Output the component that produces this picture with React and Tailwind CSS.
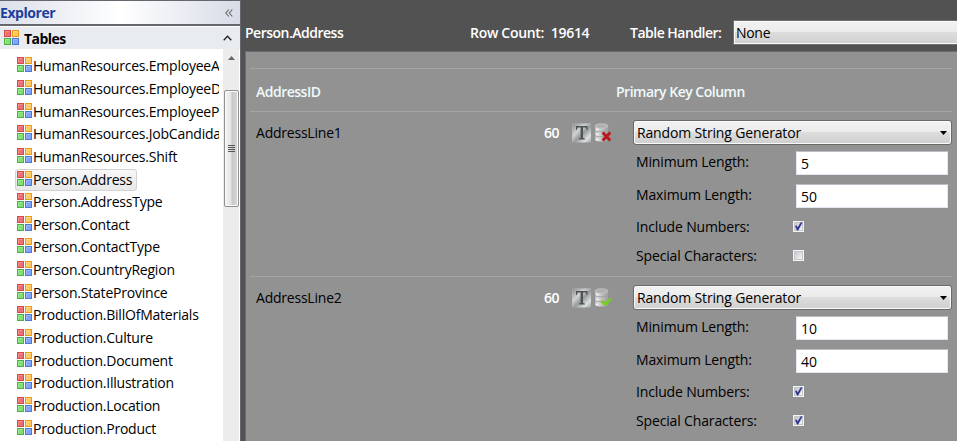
import React from 'react';

const tables = [
  'HumanResources.EmployeeAd',
  'HumanResources.EmployeeDe',
  'HumanResources.EmployeePay',
  'HumanResources.JobCandidat',
  'HumanResources.Shift',
  'Person.Address',
  'Person.AddressType',
  'Person.Contact',
  'Person.ContactType',
  'Person.CountryRegion',
  'Person.StateProvince',
  'Production.BillOfMaterials',
  'Production.Culture',
  'Production.Document',
  'Production.Illustration',
  'Production.Location',
  'Production.Product',
];

function TableIcon() {
  const cells = [
    [0, 0, '#ef6f70', '#d9484b', '#f59a9a'],
    [8, 0, '#ffc861', '#e89c12', '#ffdd94'],
    [0, 8, '#80e070', '#4fae49', '#a5ef98'],
    [8, 8, '#7ba4fa', '#4f78cf', '#a5c1ff'],
  ];
  return (
    <svg className="h-[15px] w-[15px] shrink-0" viewBox="0 0 15 15">
      {cells.map(([x, y, fill, stroke, light]) => (
        <g key={`${x}-${y}`}>
          <rect x={x + 0.5} y={y + 0.5} width="6" height="6" fill={fill} stroke={stroke} />
          <path d={`M${x + 1.5} ${y + 5.5}V${y + 1.5}H${x + 5.5}`} fill="none" stroke={light} strokeWidth="0.7" />
        </g>
      ))}
    </svg>
  );
}

function TypeIcon() {
  return (
    <svg className="h-5 w-[19px] shrink-0" viewBox="0 0 19 20">
      <defs>
        <linearGradient id="metal" x1="0" y1="0" x2="1" y2="1">
          <stop offset="0" stopColor="#858585" />
          <stop offset="0.35" stopColor="#d0d3d4" />
          <stop offset="0.55" stopColor="#979b9d" />
          <stop offset="0.8" stopColor="#dcdfe0" />
          <stop offset="1" stopColor="#a0a0a0" />
        </linearGradient>
      </defs>
      <rect x="0" y="0.5" width="19" height="19" fill="url(#metal)" />
      <path d="M0.5 19V1h18" fill="none" stroke="#bcbcbc" opacity="0.5" />
      <path d="M4 3h11.5v4h-.8l-.8-2.6h-2.9v10.6l1.8.5v.9H6.8v-.9l1.8-.5V4.4H5.6L4.8 7H4z" fill="#505355" />
    </svg>
  );
}

function DatabaseIcon({ ok }) {
  return (
    <svg className="h-5 w-[18px] shrink-0" viewBox="0 0 18 20">
      <defs>
        <linearGradient id="drum" x1="0" x2="1">
          <stop offset="0" stopColor="#bdbdbd" />
          <stop offset="0.25" stopColor="#dadada" />
          <stop offset="0.6" stopColor="#b9b9b9" />
          <stop offset="1" stopColor="#a0a0a0" />
        </linearGradient>
      </defs>
      <path d="M1 3v14c0 2 13 2 13 0V3z" fill="url(#drum)" />
      <ellipse cx="7.5" cy="3" rx="6.5" ry="2.3" fill="#b0b0b0" stroke="#c8c8c8" strokeWidth="0.8" />
      <path d="M1 7.5c2 1.7 10 1.7 13 0M1 12.5c2 1.7 10 1.7 13 0" fill="none" stroke="#a2a2a2" strokeWidth="1" />
      <path d="M3 5.5v2M3 10.5v2M3 15.5v2" stroke="#eee" strokeWidth="2.2" />
      {ok ? (
        <path d="M7.5 13l3.7 3.5L17 10.8" fill="none" stroke="#75d01c" strokeWidth="2.6" />
      ) : (
        <path d="M8.7 9.5l7.5 8M16.2 9.5l-7.5 8" fill="none" stroke="#b9181d" strokeWidth="3" />
      )}
    </svg>
  );
}

function Checkbox({ checked }) {
  return (
    <svg className="h-[11px] w-[11px] shrink-0" viewBox="0 0 11 11">
      <defs>
        <linearGradient id="box" x1="0" y1="0" x2="1" y2="1">
          <stop offset="0" stopColor="#bfc3ca" />
          <stop offset="1" stopColor="#fafafa" />
        </linearGradient>
      </defs>
      <rect width="11" height="11" fill="#f4f4f4" />
      <rect x="1.5" y="1.5" width="8" height="8" fill="url(#box)" stroke="#c2c5ca" />
      {checked && <path d="M2.2 5l1.2-.5 1.3 2L7.8 1.4l1.5.1L5.2 9.2H4z" fill="#30338b" stroke="#30338b" strokeWidth="0.3" />}
    </svg>
  );
}

function Select({ children }) {
  return (
    <div className="ml-px flex h-[25px] w-[319px] items-center rounded-[3px] border border-[#696969] bg-[linear-gradient(#f2f2f2_0%,#ebebeb_49%,#dddddd_50%,#cfcfcf_100%)] pr-[4px] pl-[3px] shadow-[inset_0_0_0_1px_#fafafa]">
      <span className="flex-1 pt-px tracking-[-0.15px]">{children}</span>
      <svg className="h-[4px] w-[7px]" viewBox="0 0 7 4"><path d="M0 0h7L3.5 4z" fill="#000" /></svg>
    </div>
  );
}

function NumberField({ label, value }) {
  return (
    <div className="flex h-6 items-center pl-[4px]">
      <span className="-mt-[2px] w-[160px] tracking-[-0.15px]">{label}</span>
      <div className="flex h-6 w-[152px] items-center border border-[#e2e7ef] border-t-[#b9bdc4] bg-white pt-[2px] pl-[4px]">{value}</div>
    </div>
  );
}

function CheckField({ label, checked }) {
  return (
    <div className="flex h-5 items-center pl-[4px]">
      <span className="w-[157px] pt-px tracking-[-0.15px]">{label}</span>
      <Checkbox checked={checked} />
    </div>
  );
}

function ColumnRow({ name, ok, min, max, special }) {
  return (
    <section className="flex h-[165px] border-t border-[#a5a5a5] pt-2">
      <div className="flex h-[25px] w-[383px] items-center pl-[6px]">
        <span className="w-[288px] tracking-[-0.22px]">{name}</span>
        <b className="w-[28px] font-semibold tracking-[-0.4px] text-white">60</b>
        <TypeIcon />
        <span className="w-[3px]" />
        <DatabaseIcon ok={ok} />
      </div>
      <div className="w-[320px]">
        <Select>Random String Generator</Select>
        <div className="mt-[6px] mb-[9px]"><NumberField label="Minimum Length:" value={min} /></div>
        <NumberField label="Maximum Length:" value={max} />
        <div className="mt-[8px] mb-[9px]"><CheckField label="Include Numbers:" checked /></div>
        <CheckField label="Special Characters:" checked={special} />
      </div>
    </section>
  );
}

function Explorer() {
  return (
    <aside className="flex h-full w-[240px] shrink-0 flex-col bg-white">
      <div className="flex h-[26px] items-center justify-between border-t border-b-2 border-[#66666e] bg-[linear-gradient(90deg,#dce0ea,#ffffff_50%,#d8dce7)] pr-[7px]">
        <b className="pt-px font-bold tracking-[-0.45px] text-[#1c409c]">Explorer</b>
        <svg className="h-[8px] w-[8px]" viewBox="0 0 8 8"><path d="M3.8.5L.8 4l3 3.5M7.3.5l-3 3.5 3 3.5" fill="none" stroke="#666" strokeWidth="1.1" /></svg>
      </div>
      <div className="mt-px flex h-[22px] items-center bg-[#e8ebf0] pr-[8px] pl-[4px]">
        <div className="-mt-[2px]"><TableIcon /></div>
        <b className="ml-[5px] flex-1 pt-[2px] font-bold tracking-[-0.55px]">Tables</b>
        <svg className="h-[6px] w-[9px]" viewBox="0 0 9 6"><path d="M.7 5.2l3.8-4 3.8 4" fill="none" stroke="#222" strokeWidth="1.3" /></svg>
      </div>
      <div className="flex min-h-0 flex-1">
        <ul className="w-[219px] overflow-hidden pt-[6px] pl-[15px]">
          {tables.map((name, i) => (
            <li key={name} className="flex h-[22.65px] items-center">
              <div className={i === 5 ? 'flex h-[22px] items-center rounded-[3px] border border-[#d2d2d2] bg-[linear-gradient(#f8f8f8,#e8e8e8)] pr-[4px] pl-px' : 'flex h-[22px] items-center pl-[2px]'}>
                <div className="-mt-[3px]"><TableIcon /></div>
                <span className="ml-[1px] tracking-[-0.22px] whitespace-nowrap">{name}</span>
              </div>
            </li>
          ))}
        </ul>
        <div className="ml-[4px] flex w-[16px] flex-col items-center bg-[#ececec] pt-[7px]">
          <svg className="h-[4px] w-[7px]" viewBox="0 0 7 4"><path d="M0 4h7L3.5 0z" fill="#666" /></svg>
          <div className="mt-[30px] flex h-[117px] w-[15px] flex-col items-center justify-center gap-px rounded-[2px] border border-[#8f8f8f] bg-[linear-gradient(90deg,#f5f5f5_0%,#e4e4e4_45%,#c8c8cc_55%,#d8d8da_100%)] shadow-[inset_0_0_0_1px_#fafafa]">
            <i className="h-px w-[7px] bg-[#555]" />
            <i className="h-px w-[7px] bg-[#555]" />
            <i className="h-px w-[7px] bg-[#555]" />
            <i className="h-px w-[7px] bg-[#555]" />
          </div>
        </div>
        <span className="w-px bg-white" />
      </div>
    </aside>
  );
}

export default function App() {
  return (
    <div className="flex h-[441px] w-[957px] overflow-hidden bg-[#525252] font-['Open_Sans','Noto_Sans',sans-serif] text-[14px] leading-[18px] font-medium text-black">
      <Explorer />
      <main className="min-w-0 flex-1 border-l border-[#66666e] pl-[4px]">
        <header className="flex h-[51px] items-center pt-[14px] text-white">
          <span className="w-[225px] shrink-0 pt-px font-semibold tracking-[-0.5px]">Person.Address</span>
          <span className="w-[160px] shrink-0 pt-px font-semibold tracking-[-0.3px] whitespace-pre">Row Count:  19614</span>
          <span className="w-[103px] shrink-0 pt-px font-semibold tracking-[-0.5px]">Table Handler:</span>
          <div className="flex h-[25px] w-[228px] shrink-0 items-center border border-[#707070] bg-[linear-gradient(#f2f2f2_0%,#ebebeb_49%,#dddddd_50%,#cfcfcf_100%)] pt-px pl-[2px] tracking-[-0.3px] text-black shadow-[inset_0_0_0_1px_#fafafa]">None</div>
        </header>
        <div className="h-[390px] border-t border-l border-[#6c6c70] bg-[#929292] pt-4 pr-[5px] pl-[4px]">
          <div className="flex h-[43px] items-center border-t border-[#a5a5a5] pt-[3px] pl-[6px] text-[#eefafa]">
            <span className="w-[360px] font-semibold tracking-[-0.5px]">AddressID</span>
            <span className="font-semibold tracking-[-0.5px]">Primary Key Column</span>
          </div>
          <ColumnRow name="AddressLine1" min="5" max="50" />
          <ColumnRow name="AddressLine2" ok min="10" max="40" special />
        </div>
      </main>
    </div>
  );
}
